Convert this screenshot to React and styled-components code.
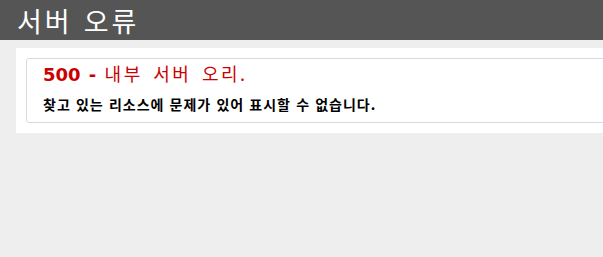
import React from 'react';
import styled, { createGlobalStyle } from 'styled-components';

const GlobalStyle = createGlobalStyle`
  html, body {
    margin: 0;
    padding: 0;
    background: #eeeeee;
    overflow: hidden;
  }
  body {
    font-family: 'DejaVu Sans', Verdana, 'Noto Sans CJK KR', sans-serif;
    font-size: 11px;
  }
`;

const Header = styled.div`
  height: 40px;
  padding: 0 17px;
  display: flex;
  align-items: center;
  background-color: #555555;
`;

const Title = styled.h1`
  margin: 0;
  font-family: 'Noto Sans CJK KR', sans-serif;
  font-size: 27px;
  font-weight: normal;
  line-height: 1;
  color: #ffffff;
  letter-spacing: 3px;
  word-spacing: 2px;
`;

const Content = styled.div`
  padding: 8px 0 0 16px;
`;

const Container = styled.div`
  width: 700px;
  padding: 10px;
  background: #ffffff;
`;

const Fieldset = styled.fieldset`
  margin: 0;
  padding: 0 15px 9px 16px;
  border: 1px solid #d4dbe2;
  border-radius: 3px;
  min-width: 0;
`;

const Heading = styled.h2`
  margin: 0;
  padding-top: 4px;
  font-family: 'DejaVu Sans', Verdana, 'Noto Sans CJK KR', sans-serif;
  font-size: 18px;
  line-height: 20px;
  font-weight: bold;
  color: #cc0000;
  word-spacing: 2px;

  span {
    font-family: 'Noto Sans CJK KR', sans-serif;
    font-weight: normal;
    letter-spacing: 2.5px;
    word-spacing: 4px;
  }
`;

const Message = styled.h3`
  margin: 10px 0 0 0;
  font-family: 'Noto Sans CJK KR', sans-serif;
  font-size: 14px;
  line-height: 18px;
  font-weight: bold;
  color: #000000;
  letter-spacing: 1px;
  word-spacing: 1px;
`;

const App = () => (
  <>
    <GlobalStyle />
    <Header>
      <Title>서버 오류</Title>
    </Header>
    <Content>
      <Container>
        <Fieldset>
          <Heading>
            500 - <span>내부 서버 오리.</span>
          </Heading>
          <Message>찾고 있는 리소스에 문제가 있어 표시할 수 없습니다.</Message>
        </Fieldset>
      </Container>
    </Content>
  </>
);

export default App;
